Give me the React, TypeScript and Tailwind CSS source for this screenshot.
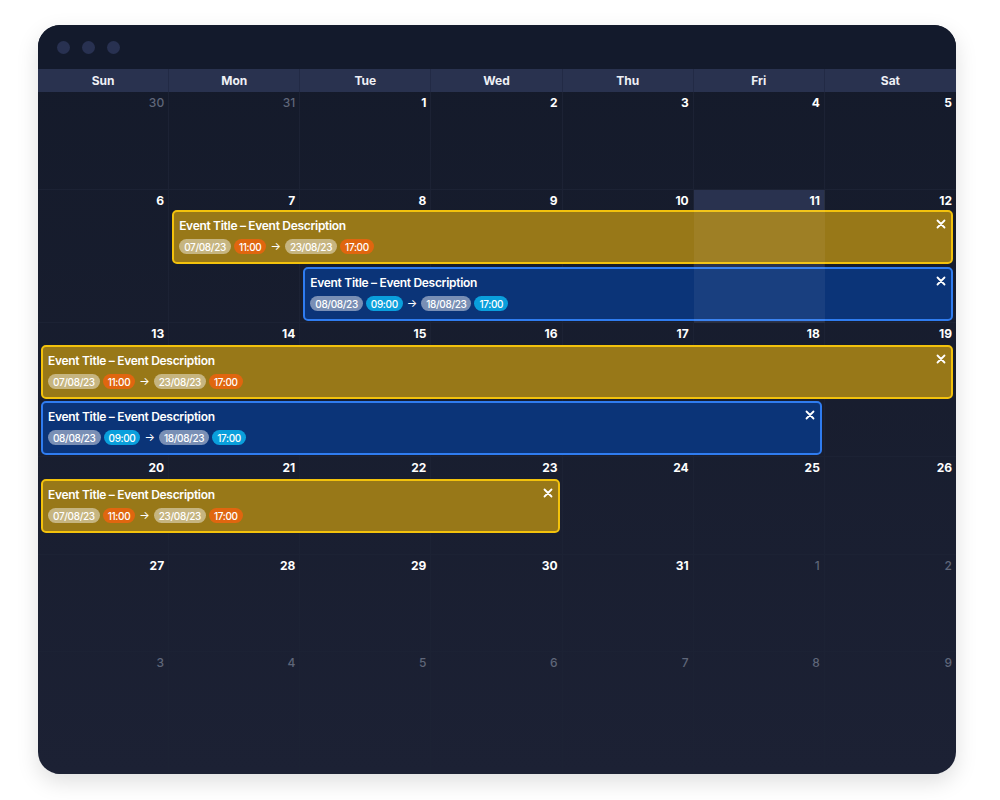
import React from "react";

type Day = { n: number; muted?: boolean; hl?: boolean };
type Ev = { color: "yellow" | "blue"; start: number; span: number; row: number };

const colStart: Record<number, string> = {
  1: "col-start-1",
  2: "col-start-2",
  3: "col-start-3",
  4: "col-start-4",
  5: "col-start-5",
  6: "col-start-6",
  7: "col-start-7",
};
const colSpan: Record<number, string> = {
  1: "col-span-1",
  2: "col-span-2",
  3: "col-span-3",
  4: "col-span-4",
  5: "col-span-5",
  6: "col-span-6",
  7: "col-span-7",
};
const rowStart: Record<number, string> = {
  2: "row-start-2",
  3: "row-start-3",
};

const d = (arr: number[], muted: boolean[] = []) =>
  arr.map((n, i) => ({ n, muted: muted[i] }));

const weeks: { days: Day[]; events: Ev[]; cls: string; rows: string }[] = [
  {
    days: d([30, 31, 1, 2, 3, 4, 5], [true, true]),
    events: [],
    cls: "h-[98px]",
    rows: "grid-rows-[20px_1fr]",
  },
  {
    days: d([6, 7, 8, 9, 10, 11, 12]).map((x) => (x.n === 11 ? { ...x, hl: true } : x)),
    events: [
      { color: "yellow", start: 2, span: 6, row: 2 },
      { color: "blue", start: 3, span: 5, row: 3 },
    ],
    cls: "h-[133px]",
    rows: "grid-rows-[20px_57px_1fr]",
  },
  {
    days: d([13, 14, 15, 16, 17, 18, 19]),
    events: [
      { color: "yellow", start: 1, span: 7, row: 2 },
      { color: "blue", start: 1, span: 6, row: 3 },
    ],
    cls: "h-[134px]",
    rows: "grid-rows-[22px_56px_1fr]",
  },
  {
    days: d([20, 21, 22, 23, 24, 25, 26]),
    events: [{ color: "yellow", start: 1, span: 4, row: 2 }],
    cls: "h-[98px]",
    rows: "grid-rows-[22px_1fr]",
  },
  {
    days: d([27, 28, 29, 30, 31, 1, 2], [false, false, false, false, false, true, true]),
    events: [],
    cls: "h-[97px]",
    rows: "grid-rows-[21px_1fr]",
  },
  {
    days: d([3, 4, 5, 6, 7, 8, 9], [true, true, true, true, true, true, true]),
    events: [],
    cls: "flex-1",
    rows: "grid-rows-[21px_1fr]",
  },
];

const font = { fontFamily: "Inter, 'Noto Sans', sans-serif" };

function Pill({ children, cls }: { children: React.ReactNode; cls: string }) {
  return (
    <span
      className={`inline-flex h-[15px] items-center rounded-full px-[5px] text-[10px] font-medium leading-none tracking-[-0.35px] text-white ${cls}`}
    >
      {children}
    </span>
  );
}

function EventBar({ ev }: { ev: Ev }) {
  const yellow = ev.color === "yellow";
  const dates = yellow ? ["07/08/23", "11:00", "23/08/23", "17:00"] : ["08/08/23", "09:00", "18/08/23", "17:00"];
  const timeCls = yellow ? "bg-[#e0660f]" : "bg-[#0a9fdc]";
  return (
    <div
      className={`${colStart[ev.start]} ${colSpan[ev.span]} ${rowStart[ev.row]} relative mx-[3px] h-[54px] rounded-[5px] border-2 px-[5px] pt-[6px] ${
        yellow ? "border-[#f3c20c] bg-[#987818]" : "border-[#2f7cf0] bg-[#0b3478]"
      }`}
    >
      <div className="text-[12px] font-semibold leading-[16px] tracking-[-0.3px] text-white">
        Event Title – Event Description
      </div>
      <div className="mt-[5px] flex items-center gap-[3px]">
        <Pill cls="bg-white/45">{dates[0]}</Pill>
        <Pill cls={timeCls}>{dates[1]}</Pill>
        <span className="mx-[1px] text-[11px] leading-none text-white">→</span>
        <Pill cls="bg-white/45">{dates[2]}</Pill>
        <Pill cls={timeCls}>{dates[3]}</Pill>
      </div>
      <svg
        className="absolute right-[5px] top-[7px]"
        width="10"
        height="10"
        viewBox="0 0 10 10"
        fill="none"
        stroke="white"
        strokeWidth="1.8"
        strokeLinecap="round"
      >
        <path d="M1.5 1.5 L8.5 8.5 M8.5 1.5 L1.5 8.5" />
      </svg>
    </div>
  );
}

export default function App() {
  const headers = ["Sun", "Mon", "Tue", "Wed", "Thu", "Fri", "Sat"];
  return (
    <div className="h-[800px] w-[1000px] bg-white pl-[38px] pt-[25px]" style={font}>
      <div className="flex h-[749px] w-[918px] flex-col overflow-hidden rounded-[22px] bg-linear-to-b from-[#141a2a] to-[#1c2134] shadow-[0_8px_22px_rgba(0,0,0,0.13)]">
        <div className="flex h-[44px] items-center gap-[12px] bg-[#131a2c] pl-[19px]">
          <span className="h-[13px] w-[13px] rounded-full bg-[#283151]" />
          <span className="h-[13px] w-[13px] rounded-full bg-[#283151]" />
          <span className="h-[13px] w-[13px] rounded-full bg-[#283151]" />
        </div>
        <div className="grid h-[23px] grid-cols-7 bg-[#29324f]">
          {headers.map((h, i) => (
            <div
              key={h}
              className={`flex items-center justify-center text-[12px] font-bold text-[#eef0f5] ${
                i < 6 ? "border-r border-[#222a45]" : ""
              }`}
            >
              {h}
            </div>
          ))}
        </div>
        {weeks.map((w, wi) => (
          <div key={wi} className={`grid grid-cols-7 ${w.rows} ${w.cls}`}>
            {w.days.map((day, i) => (
              <div
                key={i}
                className={`${colStart[i + 1]} row-span-full row-start-1 border-b border-[#1c2234] ${
                  i < 6 ? "border-r" : ""
                } ${day.hl ? "bg-[#1c2645]" : ""}`}
              >
                <div
                  className={`pr-[4px] pt-[1px] text-right text-[12px] leading-[20px] ${
                    day.muted ? "font-medium text-[#5f6679]" : "font-bold text-white"
                  }`}
                >
                  {day.n}
                </div>
              </div>
            ))}
            {w.events.map((ev, ei) => (
              <EventBar key={ei} ev={ev} />
            ))}
            {w.days.map((day, i) =>
              day.hl ? (
                <div
                  key={`hl${i}`}
                  className={`${colStart[i + 1]} pointer-events-none relative z-10 row-span-full row-start-1 bg-white/[0.06]`}
                />
              ) : null
            )}
          </div>
        ))}
      </div>
    </div>
  );
}
